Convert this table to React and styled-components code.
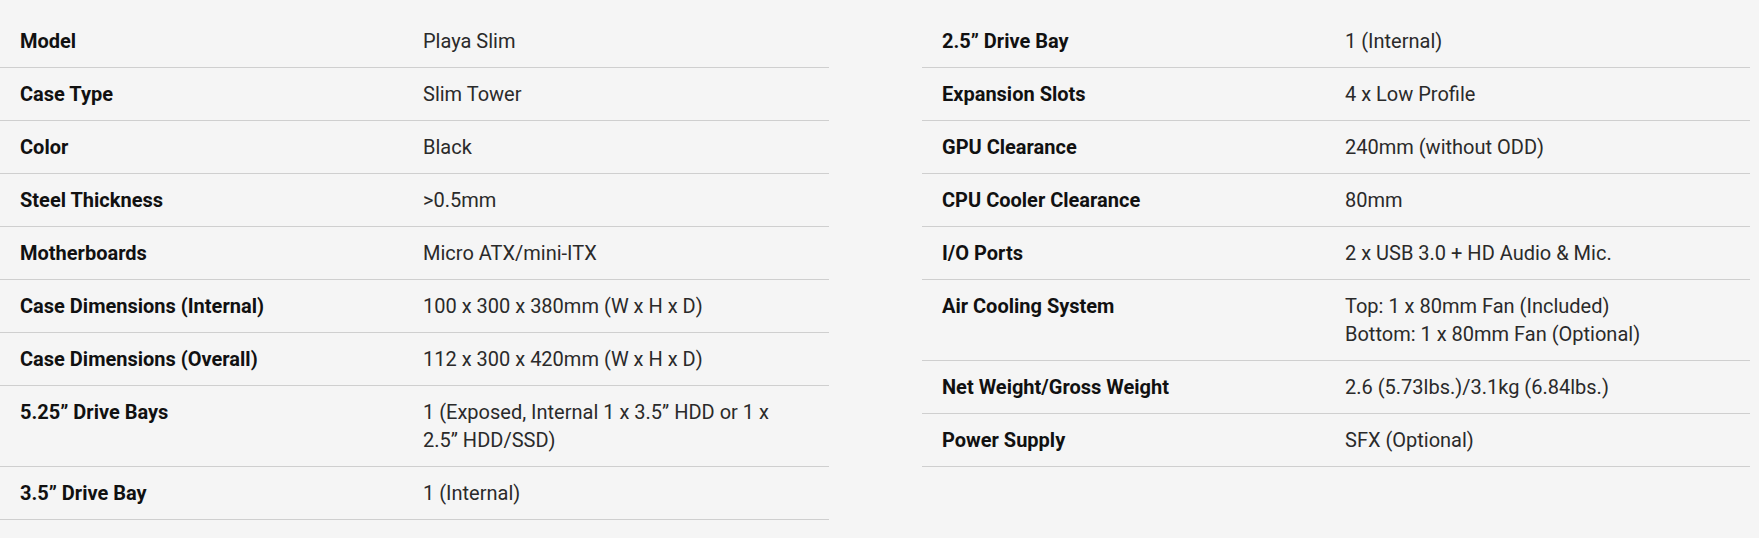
import React from "react";
import styled, { createGlobalStyle } from "styled-components";

const Global = createGlobalStyle`
  html, body { margin: 0; padding: 0; background: #f5f5f5; }
  body { font-family: Roboto, "Liberation Sans", sans-serif; }
`;

const Page = styled.div`
  display: grid;
  grid-template-columns: 829px 828px;
  column-gap: 93px;
  align-items: start;
  padding-top: 15px;
  width: 1759px;
  box-sizing: border-box;
`;

const Table = styled.div`
  display: flex;
  flex-direction: column;
`;

const Row = styled.div`
  display: grid;
  grid-template-columns: 423px 1fr;
  padding: 12px 0;
  border-bottom: 1px solid #cfcfcf;
  font-size: 20px;
  line-height: 28px;
`;

const Label = styled.div`
  padding-left: 20px;
  font-weight: 700;
  color: #111;
`;

const Value = styled.div`
  color: #2a2a2a;
  font-weight: 400;
  padding-right: 40px;
`;

const left = [
  ["Model", "Playa Slim"],
  ["Case Type", "Slim Tower"],
  ["Color", "Black"],
  ["Steel Thickness", ">0.5mm"],
  ["Motherboards", "Micro ATX/mini-ITX"],
  ["Case Dimensions (Internal)", "100 x 300 x 380mm (W x H x D)"],
  ["Case Dimensions (Overall)", "112 x 300 x 420mm (W x H x D)"],
  ["5.25\u201D Drive Bays", "1 (Exposed, Internal 1 x 3.5\u201D HDD or 1 x 2.5\u201D HDD/SSD)"],
  ["3.5\u201D Drive Bay", "1 (Internal)"],
];

const right = [
  ["2.5\u201D Drive Bay", "1 (Internal)"],
  ["Expansion Slots", "4 x Low Profile"],
  ["GPU Clearance", "240mm (without ODD)"],
  ["CPU Cooler Clearance", "80mm"],
  ["I/O Ports", "2 x USB 3.0 + HD Audio & Mic."],
  ["Air Cooling System", ["Top: 1 x 80mm Fan (Included)", "Bottom: 1 x 80mm Fan (Optional)"]],
  ["Net Weight/Gross Weight", "2.6 (5.73lbs.)/3.1kg (6.84lbs.)"],
  ["Power Supply", "SFX (Optional)"],
];

function Spec({ rows }) {
  return (
    <Table>
      {rows.map(([k, v]) => (
        <Row key={k}>
          <Label>{k}</Label>
          <Value>
            {Array.isArray(v)
              ? v.map((line, i) => (
                  <React.Fragment key={i}>
                    {i > 0 && <br />}
                    {line}
                  </React.Fragment>
                ))
              : v}
          </Value>
        </Row>
      ))}
    </Table>
  );
}

export default function App() {
  return (
    <>
      <Global />
      <Page>
        <Spec rows={left} />
        <Spec rows={right} />
      </Page>
    </>
  );
}
